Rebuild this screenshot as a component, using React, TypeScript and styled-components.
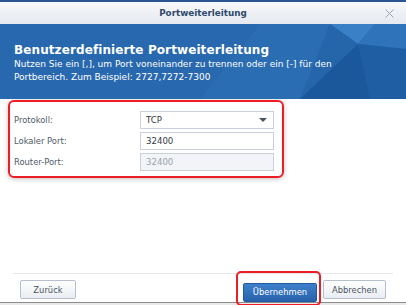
import React from "react";
import styled, { createGlobalStyle } from "styled-components";

const GlobalStyle = createGlobalStyle`
  html, body {
    margin: 0;
    padding: 0;
    background: #ffffff;
  }
  body {
    width: 406px;
    height: 305px;
    overflow: hidden;
    font-family: "DejaVu Sans", Verdana, sans-serif;
  }
  * { box-sizing: border-box; }
`;

const Dialog = styled.div`
  width: 406px;
  height: 305px;
  display: flex;
  flex-direction: column;
  border-top: 2px solid #2b5590;
  background: #ffffff;
`;

const TitleBar = styled.div`
  height: 22px;
  display: grid;
  grid-template-columns: 1fr auto 1fr;
  align-items: center;
  background: linear-gradient(#f7f8fb, #e5e9f0);
`;

const Title = styled.div`
  grid-column: 2;
  font-size: 8.8px;
  font-weight: bold;
  color: #2f4a6c;
`;

const Close = styled.div`
  justify-self: end;
  margin-right: 12px;
  display: flex;
  align-items: center;
`;

const Header = styled.div`
  position: relative;
  height: 75px;
  padding: 18px 14px 0 14px;
  background: #2767ad;
  color: #ffffff;
  overflow: hidden;
`;

const Facets = styled.svg`
  position: absolute;
  inset: 0;
`;

const HeaderText = styled.div`
  position: relative;
`;

const HeaderTitle = styled.div`
  font-size: 12px;
  font-weight: bold;
  line-height: 16px;
  letter-spacing: 0.1px;
`;

const HeaderDesc = styled.div`
  font-size: 9px;
  line-height: 13px;
`;

const Highlight = styled.div`
  margin: 1px 0 0 8px;
  width: 276px;
  border: 2px solid #ee1c25;
  border-radius: 6px;
  box-shadow: 0 1px 5px rgba(0, 0, 0, 0.25);
  padding: 9px 8px 5px 4px;
  display: flex;
  flex-direction: column;
  gap: 3px;
`;

const Row = styled.div`
  display: flex;
  align-items: center;
  height: 18px;
`;

const Label = styled.div`
  width: 126px;
  font-size: 8.4px;
  color: #4f5966;
`;

const Field = styled.div<{ $disabled?: boolean }>`
  flex: 1;
  height: 18px;
  border: 1px solid #c9d0d9;
  background: ${(p) => (p.$disabled ? "#f2f4f7" : "#ffffff")};
  color: ${(p) => (p.$disabled ? "#9aa2ad" : "#333a44")};
  font-size: 8.6px;
  display: flex;
  align-items: center;
  justify-content: space-between;
  padding: 0 6px 0 5px;
`;

const Arrow = styled.div`
  width: 0;
  height: 0;
  border-left: 4px solid transparent;
  border-right: 4px solid transparent;
  border-top: 4px solid #4a5360;
`;

const Spacer = styled.div`
  flex: 1;
`;

const Footer = styled.div`
  margin: 0 13px;
  border-top: 1px solid #e3e7ec;
  height: 29px;
  display: flex;
  align-items: flex-start;
  padding: 6px 7px 0 7px;
`;

const Button = styled.button<{ $primary?: boolean }>`
  height: 19px;
  width: ${(p) => (p.$primary ? "74px" : "63px")};
  border-radius: 2px;
  font-family: "DejaVu Sans", Verdana, sans-serif;
  font-size: 8.4px;
  padding: 0;
  border: 1px solid ${(p) => (p.$primary ? "#1f5aa0" : "#b5c0cc")};
  background: ${(p) =>
    p.$primary
      ? "linear-gradient(#3f7fcb, #2862ab)"
      : "linear-gradient(#ffffff, #e9edf2)"};
  color: ${(p) => (p.$primary ? "#ffffff" : "#4a5360")};
`;

const BackButton = styled(Button)`
  width: 56px;
`;

const Marked = styled.div`
  position: relative;
  margin-left: auto;
  &::after {
    content: "";
    position: absolute;
    left: -7px;
    right: -4px;
    top: -9px;
    bottom: -4px;
    border: 2px solid #ee1c25;
    border-radius: 5px;
  }
`;

const Actions = styled.div`
  display: flex;
  gap: 6px;
  margin-left: auto;
`;

const BottomEdge = styled.div`
  height: 3px;
  border-top: 1px solid #8c8c8c;
  background: #e9e9e9;
`;

export default function App() {
  return (
    <>
      <GlobalStyle />
      <Dialog>
        <TitleBar>
          <Title>Portweiterleitung</Title>
          <Close>
            <svg width="9" height="9" viewBox="0 0 9 9">
              <path
                d="M0.5 0.5 L8.5 8.5 M8.5 0.5 L0.5 8.5"
                stroke="#9aa3ad"
                strokeWidth="1"
              />
            </svg>
          </Close>
        </TitleBar>
        <Header>
          <Facets width="406" height="75" viewBox="0 0 406 75">
            <polygon points="0,0 260,0 200,75 0,75" fill="#2868ae" />
            <polygon points="260,0 330,0 300,75 200,75" fill="#2a6db3" />
            <polygon points="330,0 375,0 358,20" fill="#3a80c6" />
            <polygon points="375,0 406,0 406,25 358,20" fill="#2f74bb" />
            <polygon points="330,0 358,20 300,75" fill="#2565aa" />
            <polygon points="358,20 406,25 406,75 370,75" fill="#1f5ea3" />
            <polygon points="358,20 370,75 300,75" fill="#1b579b" />
          </Facets>
          <HeaderText>
            <HeaderTitle>Benutzerdefinierte Portweiterleitung</HeaderTitle>
            <HeaderDesc>
              Nutzen Sie ein [,], um Port voneinander zu trennen oder ein [-] für den
              <br />
              Portbereich. Zum Beispiel: 2727,7272-7300
            </HeaderDesc>
          </HeaderText>
        </Header>
        <Highlight>
          <Row>
            <Label>Protokoll:</Label>
            <Field>
              TCP
              <Arrow />
            </Field>
          </Row>
          <Row>
            <Label>Lokaler Port:</Label>
            <Field>32400</Field>
          </Row>
          <Row>
            <Label>Router-Port:</Label>
            <Field $disabled>32400</Field>
          </Row>
        </Highlight>
        <Spacer />
        <Footer>
          <BackButton>Zurück</BackButton>
          <Actions>
            <Marked>
              <Button $primary>Übernehmen</Button>
            </Marked>
            <Button>Abbrechen</Button>
          </Actions>
        </Footer>
        <BottomEdge />
      </Dialog>
    </>
  );
}
